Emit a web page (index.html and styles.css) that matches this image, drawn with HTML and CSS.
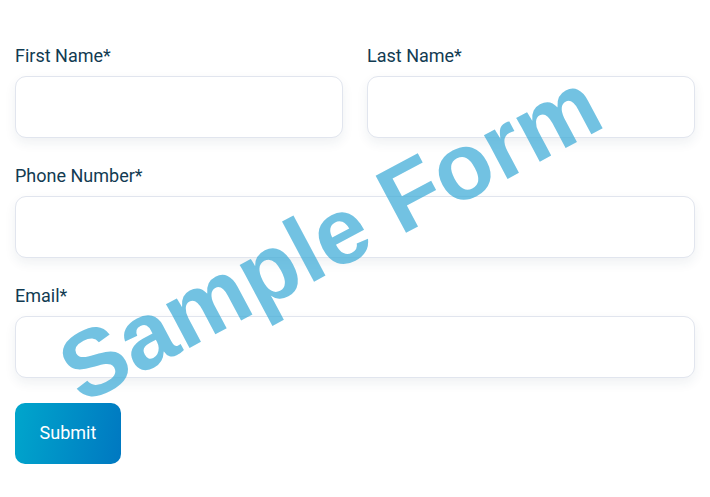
FILE: index.html
```
<!DOCTYPE html>
<html>
<head>
<meta charset="utf-8">
<link rel="stylesheet" href="styles.css">
</head>
<body>
<form class="form">
  <div class="row two">
    <div class="field">
      <label class="label">First Name*</label>
      <input class="input" type="text">
    </div>
    <div class="field">
      <label class="label">Last Name*</label>
      <input class="input" type="text">
    </div>
  </div>
  <div class="row">
    <div class="field">
      <label class="label">Phone Number*</label>
      <input class="input" type="text">
    </div>
  </div>
  <div class="row">
    <div class="field">
      <label class="label">Email*</label>
      <input class="input" type="text">
    </div>
  </div>
  <button class="submit" type="button">Submit</button>
</form>
<div class="watermark">Sample Form</div>
</body>
</html>
```
FILE: styles.css
```
html, body {
  margin: 0;
  padding: 0;
  background: #ffffff;
}
body {
  width: 710px;
  height: 497px;
  position: relative;
  overflow: hidden;
  font-family: Roboto, "Liberation Sans", sans-serif;
}
.form {
  padding: 46px 15px 0 15px;
  display: flex;
  flex-direction: column;
  gap: 28px;
}
.row {
  display: grid;
  grid-template-columns: 1fr;
}
.row.two {
  grid-template-columns: 1fr 1fr;
  column-gap: 24px;
}
.field {
  display: flex;
  flex-direction: column;
  gap: 10px;
}
.label {
  font-size: 18px;
  line-height: 20px;
  color: #123b52;
}
.input {
  box-sizing: border-box;
  height: 62px;
  width: 100%;
  border: 1px solid #e1e5ee;
  border-radius: 11px;
  background: #fff;
  box-shadow: 0 5px 12px rgba(30, 50, 80, 0.07);
  outline: none;
  margin: 0;
}
.submit {
  margin-top: -3px;
  align-self: flex-start;
  width: 106px;
  height: 61px;
  border: none;
  border-radius: 10px;
  background: linear-gradient(100deg, #00a6cc 0%, #0078c1 100%);
  color: #ffffff;
  font-family: Roboto, "Liberation Sans", sans-serif;
  font-size: 18px;
  padding: 0 0 2px 0;
}
.watermark {
  position: absolute;
  left: 330px;
  top: 237px;
  transform: translate(-50%, -50%) rotate(-28deg);
  font-family: "Liberation Sans", Arial, sans-serif;
  font-weight: bold;
  font-size: 94px;
  line-height: 1;
  white-space: nowrap;
  color: rgba(60, 170, 215, 0.72);
  pointer-events: none;
}
```
